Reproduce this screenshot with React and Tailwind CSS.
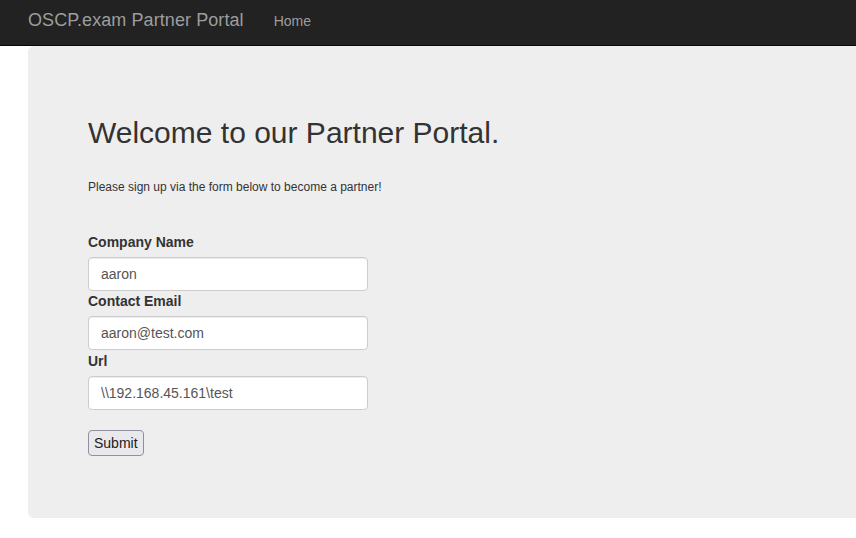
export default function App() {
  return (
    <div className="min-h-[538px] bg-white overflow-hidden text-[#333]" style={{ fontFamily: '"Liberation Sans", Arial, sans-serif' }}>

      {/* Navbar */}
      <nav className="h-[46px] bg-[#222] border-b border-[#080808] flex items-start pl-[28px]">
        <a className="pt-[10px] text-[18px] leading-[20px] text-[#9d9d9d] tracking-[0.08px]">OSCP.exam Partner Portal</a>
        <a className="ml-[30px] pt-[11px] text-[14px] leading-[20px] text-[#9d9d9d]">Home</a>
      </nav>

      {/* Jumbotron */}
      <div className="ml-[28px] mr-[-20px] h-[472px] bg-[#eee] rounded-[6px] pl-[60px] pt-[70px]">
        <h2 className="text-[30px] leading-[33px] font-normal">Welcome to our Partner Portal.</h2>
        <p className="mt-[30px] text-[12px] leading-[17px]">Please sign up via the form below to become a partner!</p>

        <form className="mt-[36px] w-[280px]">
          <Field label="Company Name" value="aaron" />
          <Field label="Contact Email" value="aaron@test.com" />
          <div className="mt-[1px]">
            <Field label="Url" value={'\\\\192.168.45.161\\test'} />
          </div>
          <button
            type="button"
            className="mt-[20px] h-[26px] px-[5px] text-[14px] leading-[20px] text-[#1b1b1b] bg-[#e9e9ed] border border-[#8f8f9d] rounded-[4px]"
          >
            Submit
          </button>
        </form>
      </div>
    </div>
  );
}

function Field({ label, value }) {
  return (
    <div>
      <label className="block text-[14px] leading-[20px] font-bold mb-[5px]">{label}</label>
      <input
        readOnly
        value={value}
        className="block w-full h-[34px] px-[12px] text-[14px] text-[#555] bg-white border border-[#ccc] rounded-[4px] shadow-[inset_0_1px_1px_rgba(0,0,0,0.075)] outline-none"
      />
    </div>
  );
}
